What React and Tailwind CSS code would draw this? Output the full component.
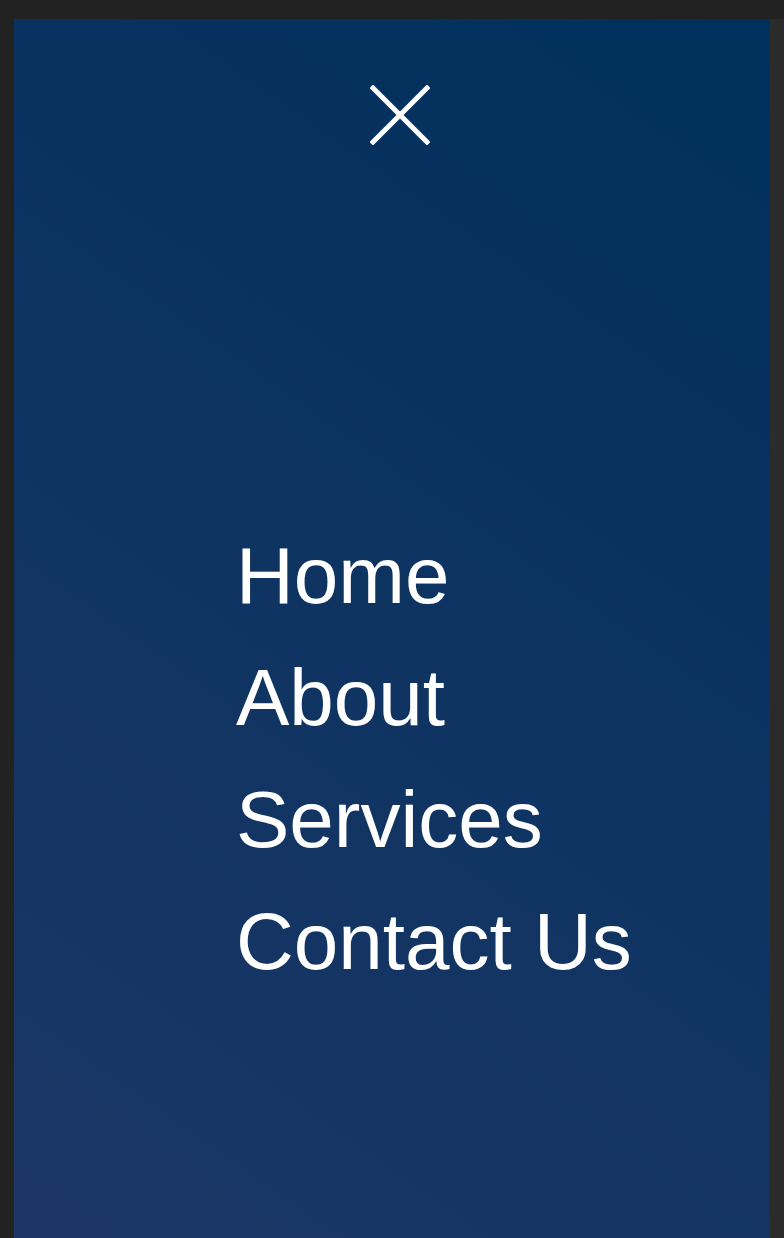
import React from "react";

const links = ["Home", "About", "Services", "Contact Us"];

const CloseIcon = () => (
  <svg width="60" height="60" viewBox="0 0 60 60" fill="none" stroke="white" strokeWidth="5" strokeLinecap="square">
    <line x1="3" y1="3" x2="57" y2="57" />
    <line x1="57" y1="3" x2="3" y2="57" />
  </svg>
);

export default function App() {
  return (
    <div className="h-[1238px] w-full overflow-hidden bg-[#222222] pt-[19px] pl-[14px] font-['Liberation_Sans',Arial,sans-serif]">
      <div className="flex h-full">
        <div className="flex-1 h-full bg-linear-[215deg] from-[#00305c] to-[#1c3767]">
          <div className="flex justify-center pt-[66px] pl-[16px]">
            <button aria-label="Close menu">
              <CloseIcon />
            </button>
          </div>
          <nav className="mt-[370px] pl-[222px]">
            <ul className="flex flex-col">
              {links.map((label) => (
                <li key={label}>
                  <a href="#" className="block text-[80px] leading-[122px] text-white">
                    {label}
                  </a>
                </li>
              ))}
            </ul>
          </nav>
        </div>
        <div className="w-[14px] h-full bg-[#2b2b2b]"></div>
      </div>
    </div>
  );
}
